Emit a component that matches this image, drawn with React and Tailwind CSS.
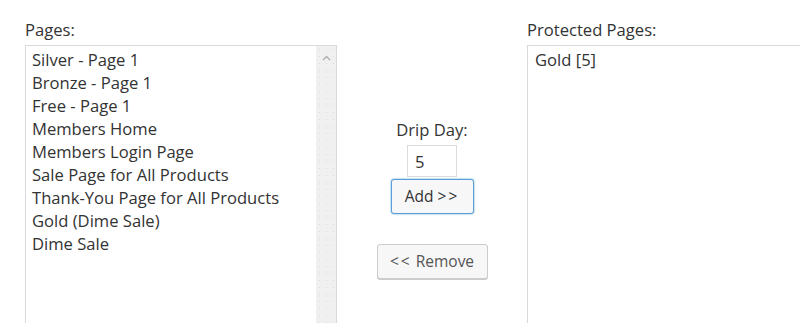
export default function App() {
  const pages = [
    'Silver - Page 1',
    'Bronze - Page 1',
    'Free - Page 1',
    'Members Home',
    'Members Login Page',
    'Sale Page for All Products',
    'Thank-You Page for All Products',
    'Gold (Dime Sale)',
    'Dime Sale',
  ];

  return (
    <div
      className="flex h-[323px] w-[800px] overflow-hidden bg-white pl-[25px] text-[16.6px] text-[#333]"
      style={{ fontFamily: '"Open Sans", "Noto Sans", sans-serif' }}
    >
      {/* Pages */}
      <div className="flex w-[312px] shrink-0 flex-col pt-[19px]">
        <div className="h-[26px] shrink-0 leading-[22px]">Pages:</div>
        <div className="flex h-[320px] shrink-0 border border-[#dadada]">
          <div className="flex-1 pl-[6px] pt-[2px] leading-[23px]">
            {pages.map((p) => (
              <div key={p} className="whitespace-nowrap">
                {p}
              </div>
            ))}
          </div>
          <div className="relative w-[20px] shrink-0 bg-[#f0f0f0] bg-[radial-gradient(#dcdcdc_0.5px,transparent_0.7px)] bg-[length:7px_7px]">
            <svg className="absolute left-[6px] top-[9px] h-[6px] w-[9px]" viewBox="0 0 9 6">
              <path d="M1 5 L4.5 1.5 L8 5" fill="none" stroke="#a8a8a8" strokeWidth="1.2" />
            </svg>
          </div>
        </div>
      </div>

      {/* Middle controls */}
      <div className="flex w-[190px] shrink-0 flex-col items-center pt-[119px]">
        <div className="leading-[22px]">Drip Day:</div>
        <input
          defaultValue="5"
          className="mt-[4px] h-[32px] w-[50px] border border-[#dcdcdc] px-[7px] text-[16.6px] text-[#333] outline-none"
          style={{ fontFamily: '"Open Sans", "Noto Sans", sans-serif' }}
        />
        <button className="mt-[2px] h-[35px] w-[83px] rounded-[3px] border border-[#5b9dd9] bg-[#f7f7f7] text-[15.5px] text-[#333] shadow-[0_0_2px_rgba(30,140,190,0.8)]">
          Add <span className="tracking-[2px]">&gt;&gt;</span>
        </button>
        <button className="mt-[30px] h-[35px] w-[111px] rounded-[3px] border border-[#cccccc] bg-[#f7f7f7] text-[15.5px] text-[#555] shadow-[0_1px_0_#ccc]">
          <span className="tracking-[2px]">&lt;&lt;</span> Remove
        </button>
      </div>

      {/* Protected pages */}
      <div className="flex flex-1 flex-col pt-[19px]">
        <div className="h-[26px] shrink-0 whitespace-nowrap leading-[22px]">Protected Pages:</div>
        <div className="h-[320px] shrink-0 border border-r-0 border-[#dadada] pl-[7px] pt-[2px] leading-[23px]">
          Gold [5]
        </div>
      </div>
    </div>
  );
}
